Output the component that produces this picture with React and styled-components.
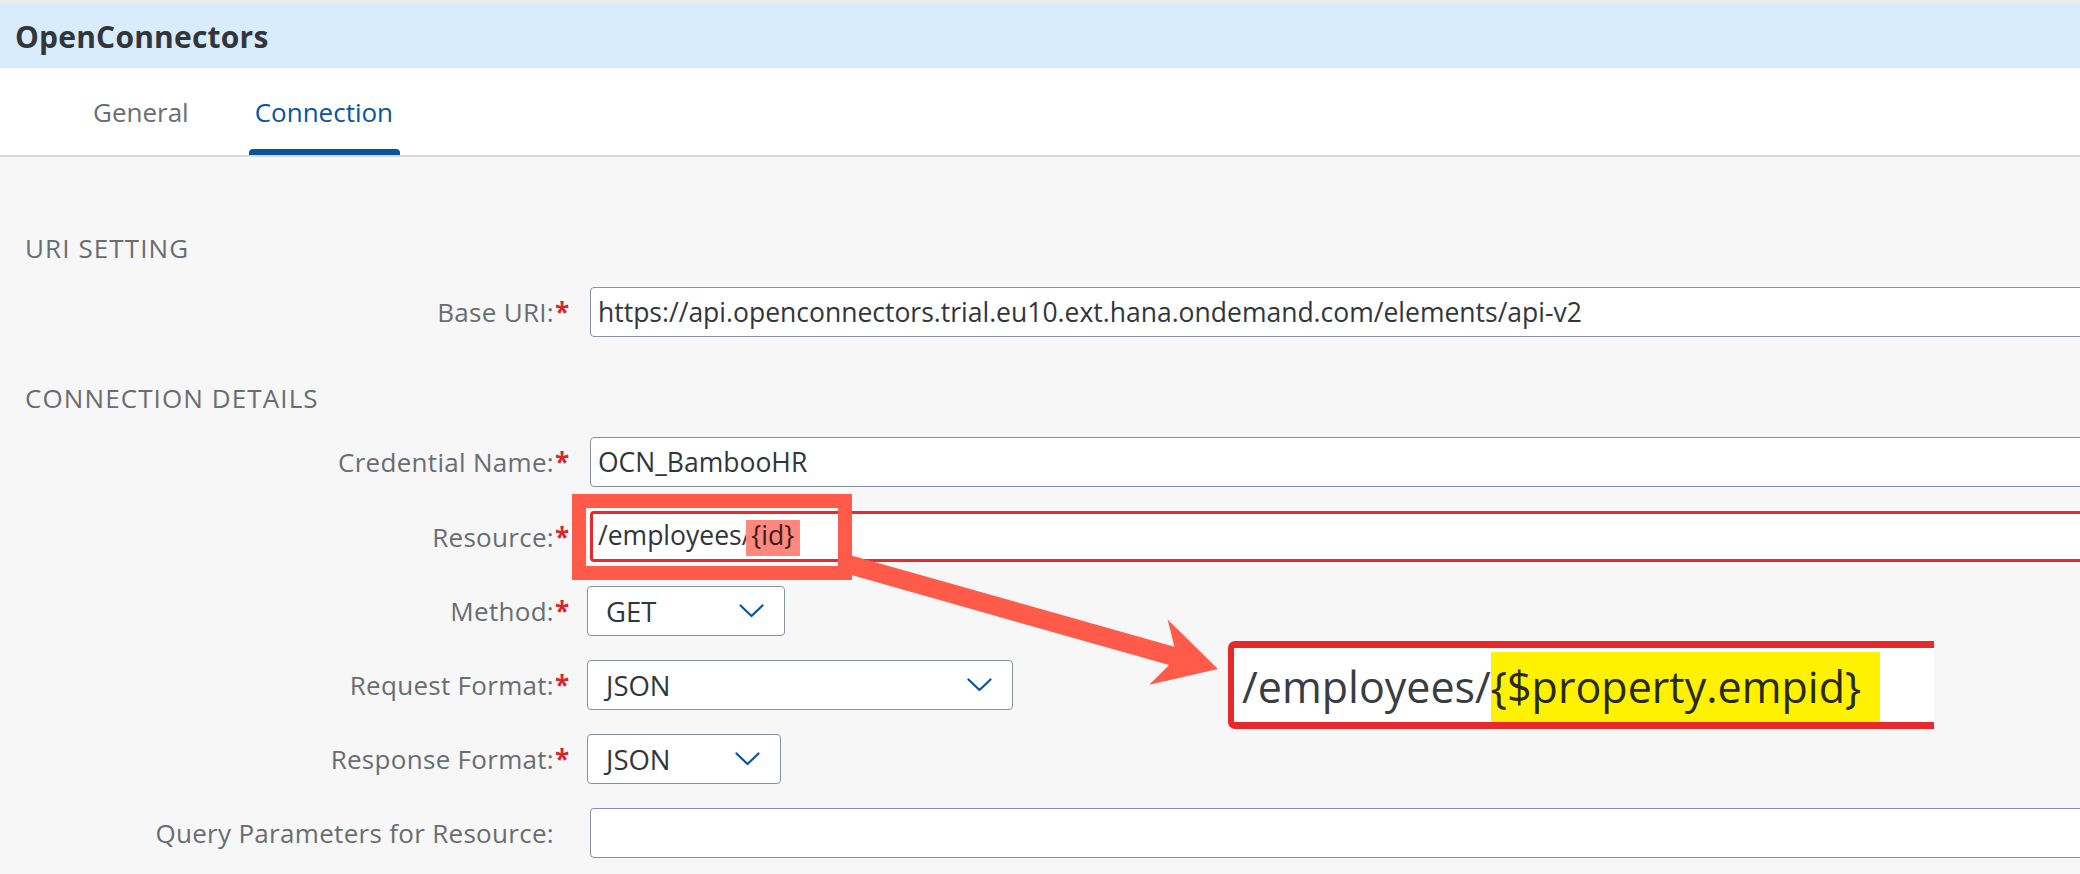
import React from "react";
import styled, { createGlobalStyle } from "styled-components";

const Global = createGlobalStyle`
  html, body { margin: 0; padding: 0; }
  body {
    font-family: "Open Sans", "Noto Sans", Arial, sans-serif;
    background: #f7f7f7;
    overflow: hidden;
    width: 2080px;
    height: 874px;
  }
  * { box-sizing: border-box; }
`;

const Page = styled.div`
  position: relative;
  width: 2080px;
  height: 874px;
  overflow: hidden;
  background: #f7f7f7;
`;

const Header = styled.header`
  height: 68px;
  border-top: 4px solid #ececec;
  background: #d9ecfd;
  display: flex;
  align-items: center;
  padding-left: 15px;
  font-size: 30px;
  letter-spacing: 0.2px;
  font-weight: 700;
  color: #32363a;
`;

const TabBar = styled.nav`
  height: 89px;
  background: #ffffff;
  border-bottom: 2px solid #d9d9d9;
  display: flex;
  align-items: stretch;
  gap: 53px;
  padding-left: 87px;
`;

const Tab = styled.div`
  position: relative;
  display: flex;
  align-items: center;
  padding: 0 7px 0 6px;
  font-size: 26px;
  color: ${(p) => (p.$active ? "#0854a0" : "#6a6d70")};
  &::after {
    content: "";
    display: ${(p) => (p.$active ? "block" : "none")};
    position: absolute;
    left: 0;
    right: 0;
    bottom: 0;
    height: 6px;
    background: #0854a0;
    border-radius: 4px 4px 0 0;
  }
`;

const Content = styled.main`
  display: flex;
  flex-direction: column;
`;

const SectionTitle = styled.h2`
  margin: ${(p) => p.$mt}px 0 0 0;
  padding-left: 25px;
  height: 36px;
  line-height: 36px;
  font-size: 26px;
  font-weight: 400;
  letter-spacing: 1.1px;
  color: #6a6d70;
`;

const Form = styled.div`
  display: flex;
  flex-direction: column;
  gap: 24px;
  margin-top: 21px;
`;

const Row = styled.div`
  display: flex;
  align-items: center;
`;

const Label = styled.label`
  width: 572px;
  flex: none;
  display: flex;
  justify-content: flex-end;
  align-items: center;
  padding-right: 3px;
  font-size: 26px;
  letter-spacing: 0.3px;
  color: #6a6d70;
  white-space: nowrap;
`;

const Req = styled.span`
  display: inline-block;
  width: 15px;
  padding-left: 1px;
  letter-spacing: 0;
  color: #d8262c;
  font-weight: 700;
  visibility: ${(p) => (p.$hidden ? "hidden" : "visible")};
`;

const TextField = styled.div`
  flex: 1;
  margin-left: 18px;
  margin-right: -20px;
  height: ${(p) => (p.$error ? 51 : 50)}px;
  background: #ffffff;
  border: ${(p) => (p.$error ? "3px solid #e52b2d" : "1px solid #89919a")};
  border-radius: 4px;
  display: flex;
  align-items: center;
  padding-left: ${(p) => (p.$error ? 5 : 7)}px;
  font-size: 26.5px;
  color: #32363a;
  white-space: nowrap;
`;

const Value = styled.span`
  display: block;
  line-height: 36px;
`;

const Mark = styled.span`
  display: inline-block;
  vertical-align: -3px;
  line-height: 36px;
  height: 36px;
  margin-left: -5px;
  padding: 0 6px 0 5px;
  background: #ff877e;
  color: #3a1d1a;
`;

const MarkText = styled.span`
  display: inline-block;
  transform: translateY(-3px);
`;

const Select = styled.div`
  flex: none;
  width: ${(p) => p.$w}px;
  margin-left: 15px;
  height: 50px;
  background: #ffffff;
  border: 1px solid #89919a;
  border-radius: 4px;
  display: flex;
  align-items: center;
  justify-content: space-between;
  padding: 0 20px 0 18px;
  font-size: 27.5px;
  color: #32363a;
`;

const Chevron = () => (
  <svg width="25" height="14" viewBox="0 0 25 14" aria-hidden="true">
    <polyline
      points="1.5,1.5 12.5,12 23.5,1.5"
      fill="none"
      stroke="#0854a0"
      strokeWidth="2.2"
      strokeLinecap="round"
      strokeLinejoin="round"
    />
  </svg>
);

const Overlay = styled.svg`
  position: absolute;
  left: 0;
  top: 0;
  pointer-events: none;
`;

const Callout = styled.div`
  position: absolute;
  left: 1228px;
  top: 641px;
  width: 706px;
  height: 88px;
  background: #ffffff;
  border: 7px solid #e7282d;
  border-left-width: 6px;
  border-right: none;
  border-radius: 7px 0 0 7px;
  display: flex;
  align-items: flex-end;
  padding-left: 8px;
  font-size: 43px;
  line-height: 70px;
  white-space: nowrap;
  color: #3a3d42;
`;

const Highlight = styled.span`
  display: inline-block;
  background: #fff200;
  color: #2a2a10;
  padding-right: 19px;
`;

export default function App() {
  return (
    <>
      <Global />
      <Page>
        <Header>OpenConnectors</Header>
        <TabBar>
          <Tab>General</Tab>
          <Tab $active>Connection</Tab>
        </TabBar>
        <Content>
          <SectionTitle $mt={73}>URI SETTING</SectionTitle>
          <Form>
            <Row>
              <Label>
                Base URI:<Req>*</Req>
              </Label>
              <TextField>
                <Value>
                  https://api.openconnectors.trial.eu10.ext.hana.ondemand.com/elements/api-v2
                </Value>
              </TextField>
            </Row>
          </Form>
          <SectionTitle $mt={43}>CONNECTION DETAILS</SectionTitle>
          <Form>
            <Row>
              <Label>
                Credential Name:<Req>*</Req>
              </Label>
              <TextField>
                <Value>OCN_BambooHR</Value>
              </TextField>
            </Row>
            <Row>
              <Label>
                Resource:<Req>*</Req>
              </Label>
              <TextField $error>
                <Value>
                  /employees/
                  <Mark>
                    <MarkText>{"{id}"}</MarkText>
                  </Mark>
                </Value>
              </TextField>
            </Row>
            <Row>
              <Label>
                Method:<Req>*</Req>
              </Label>
              <Select $w={198}>
                GET
                <Chevron />
              </Select>
            </Row>
            <Row>
              <Label>
                Request Format:<Req>*</Req>
              </Label>
              <Select $w={426}>
                JSON
                <Chevron />
              </Select>
            </Row>
            <Row>
              <Label>
                Response Format:<Req>*</Req>
              </Label>
              <Select $w={194}>
                JSON
                <Chevron />
              </Select>
            </Row>
            <Row>
              <Label>
                Query Parameters for Resource:<Req $hidden>*</Req>
              </Label>
              <TextField />
            </Row>
          </Form>
        </Content>

        <Overlay width="2080" height="874" viewBox="0 0 2080 874">
          <rect
            x="579"
            y="501"
            width="266"
            height="72"
            fill="none"
            stroke="#ff5a4a"
            strokeWidth="14"
          />
          <polygon
            fill="#ff5a4a"
            points="842.6,552.9 1174.4,646.8 1167.6,619.4 1218,669 1149.2,684.8 1169.2,665 837.4,571.1"
          />
        </Overlay>

        <Callout>
          /employees/<Highlight>{"{$property.empid}"}</Highlight>
        </Callout>
      </Page>
    </>
  );
}
